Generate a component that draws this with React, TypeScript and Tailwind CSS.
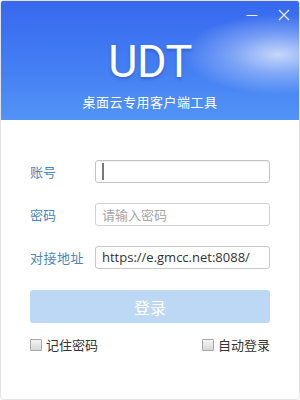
import { useState } from "react";

const cjk = "font-['Microsoft_YaHei','Noto_Sans_CJK_SC',sans-serif]";

export default function App() {
  const [remember, setRemember] = useState(false);
  const [autoLogin, setAutoLogin] = useState(false);

  return (
    <div className="h-[400px] w-[300px] overflow-hidden rounded-b-[4px] rounded-t-[3px] border border-[#e3e3e3] bg-white">
      <header className="relative flex h-[119px] flex-col items-center bg-[radial-gradient(ellipse_95px_40px_at_93%_45%,rgba(255,255,255,0.7)_0%,rgba(255,255,255,0.3)_50%,rgba(255,255,255,0)_100%),linear-gradient(180deg,#3768ef_0%,#4580f3_60%,#5394f6_100%)]">
        <div className="absolute right-[9px] top-[8px] flex items-center gap-[20px] text-white/90">
          <svg width="12" height="12" viewBox="0 0 12 12">
            <path d="M0.5 6.5h11" stroke="currentColor" strokeWidth="1.2" />
          </svg>
          <svg width="12" height="12" viewBox="0 0 12 12">
            <path d="M1 1l10 10M11 1L1 11" stroke="currentColor" strokeWidth="1.2" />
          </svg>
        </div>
        <h1 className="mt-[38px] font-['Roboto',sans-serif] text-[45px] font-normal leading-[46px] tracking-[-0.5px] text-white [text-shadow:0_2px_3px_rgba(20,50,140,0.35)]">
          UDT
        </h1>
        <p className={`${cjk} mt-[8px] text-[13px] leading-[18px] tracking-[0.5px] text-white`}>
          桌面云专用客户端工具
        </p>
      </header>

      <form className={`${cjk} px-[29px] pt-[40px]`}>
        <div className="flex items-center">
          <label className="w-[65px] text-[13px] text-[#4a86b6]">账号</label>
          <div className="flex h-[23px] flex-1 items-center rounded-[3px] border border-[#c4c4c4] px-[6px] shadow-[inset_0_1px_1px_rgba(0,0,0,0.06)]">
            <span className="h-[17px] w-[2px] bg-[#777]" />
          </div>
        </div>

        <div className="mt-[20px] flex items-center">
          <label className="w-[65px] text-[13px] text-[#4a86b6]">密码</label>
          <div className="flex h-[23px] flex-1 items-center rounded-[3px] border border-[#d2d2d2] px-[6px]">
            <span className="text-[13px] text-[#a5a5a5]">请输入密码</span>
          </div>
        </div>

        <div className="mt-[20px] flex items-center">
          <label className="w-[65px] text-[13px] tracking-[0.5px] text-[#4a86b6]">对接地址</label>
          <div className="flex h-[23px] flex-1 items-center rounded-[3px] border border-[#c8c8c8] px-[6px]">
            <span className="font-['Open_Sans',sans-serif] text-[13px] text-[#333]">
              https://e.gmcc.net:8088/
            </span>
          </div>
        </div>

        <button
          type="button"
          className="mt-[21px] flex h-[33px] w-full items-center justify-center rounded-[3px] bg-[#bcd8f4] text-[16px] text-white"
        >
          登录
        </button>

        <div className="mt-[12px] flex items-center justify-between text-[13px] text-[#333]">
          <label className="flex items-center gap-[4px]" onClick={() => setRemember(!remember)}>
            <span className="h-[12px] w-[12px] rounded-[1px] border border-[#a9a9a9] bg-[linear-gradient(180deg,#f4f4f4,#d8d8d8)]">
              {remember ? "✓" : null}
            </span>
            记住密码
          </label>
          <label className="flex items-center gap-[4px]" onClick={() => setAutoLogin(!autoLogin)}>
            <span className="h-[12px] w-[12px] rounded-[1px] border border-[#a9a9a9] bg-[linear-gradient(180deg,#f4f4f4,#d8d8d8)]">
              {autoLogin ? "✓" : null}
            </span>
            自动登录
          </label>
        </div>
      </form>
    </div>
  );
}
